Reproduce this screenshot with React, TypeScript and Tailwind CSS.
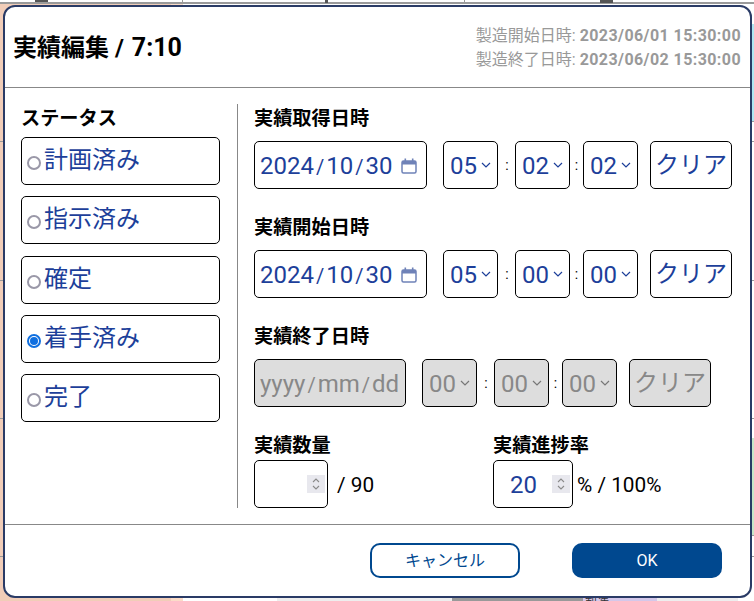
import React from 'react';

const FONT = "font-['Roboto','Noto_Sans_CJK_JP',sans-serif]";

const Chevron = ({ disabled }: { disabled?: boolean }) => (
  <svg width="10" height="6" viewBox="0 0 10 6" fill="none" className="shrink-0">
    <path d="M1 1l4 4 4-4" stroke={disabled ? '#777777' : '#1d3f9a'} strokeWidth="1.2" />
  </svg>
);

const CalendarIcon = () => (
  <svg width="16" height="16" viewBox="0 0 16 16" className="shrink-0">
    <rect x="1" y="3" width="14" height="12" rx="1.5" fill="none" stroke="#6f82b8" strokeWidth="1.5" />
    <rect x="1" y="3" width="14" height="3.5" fill="#6f82b8" />
    <rect x="3.5" y="0.5" width="1.6" height="3" fill="#6f82b8" />
    <rect x="10.9" y="0.5" width="1.6" height="3" fill="#6f82b8" />
  </svg>
);

const Spinner = () => (
  <div className="w-[18px] h-[18px] bg-[#e8e8ee] flex flex-col items-center justify-center gap-[2px]">
    <svg width="8" height="5" viewBox="0 0 8 5" fill="none">
      <path d="M1 4l3-3 3 3" stroke="#8a8a8a" strokeWidth="1.1" />
    </svg>
    <svg width="8" height="5" viewBox="0 0 8 5" fill="none">
      <path d="M1 1l3 3 3-3" stroke="#8a8a8a" strokeWidth="1.1" />
    </svg>
  </div>
);

const Radio = ({ label, checked }: { label: string; checked?: boolean }) => (
  <div className="h-[48px] w-[199px] border border-black rounded-[5px] flex items-center pl-[5px] gap-[3px] text-[24px] text-[#1d3f9a] bg-white">
    {checked ? (
      <span className="w-[14px] h-[14px] mt-[4px] rounded-full border-[2px] border-[#0f6fe0] flex items-center justify-center shrink-0">
        <span className="w-[8px] h-[8px] rounded-full bg-[#0f6fe0]" />
      </span>
    ) : (
      <span className="w-[14px] h-[14px] mt-[4px] rounded-full border-[2px] border-[#9a98a8] shrink-0" />
    )}
    <span className="leading-none relative -top-[1px]">{label}</span>
  </div>
);

const TimeSelect = ({ value, disabled }: { value: string; disabled?: boolean }) => (
  <div
    className={`h-[48px] w-[55px] border border-black rounded-[5px] flex items-center justify-between pl-[6px] pr-[6px] text-[24px] ${
      disabled ? 'bg-[#dddddd] text-[#888888]' : 'bg-white text-[#1d3f9a]'
    }`}
  >
    <span className="relative top-[1px]">{value}</span>
    <Chevron disabled={disabled} />
  </div>
);

const ClearButton = ({ disabled }: { disabled?: boolean }) => (
  <div
    className={`h-[48px] w-[82px] border border-black rounded-[5px] flex items-center justify-center text-[24px] ${
      disabled ? 'bg-[#dddddd] text-[#888888]' : 'bg-white text-[#1d3f9a]'
    }`}
  >
    クリア
  </div>
);

const Slash = () => <span className="mx-[2px] text-[20px]">/</span>;

const DateTimeRow = ({
  label,
  date,
  h,
  m,
  s,
  disabled,
}: {
  label: string;
  date: string[];
  h: string;
  m: string;
  s: string;
  disabled?: boolean;
}) => (
  <div>
    <div className="text-[19.2px] font-bold text-black leading-[30px] mb-[7px]">{label}</div>
    <div className="flex items-center">
      <div
        className={`h-[48px] border border-black rounded-[5px] flex items-center text-[24px] pl-[5px] ${
          disabled ? 'w-[152px] bg-[#dddddd] text-[#888888]' : 'w-[173px] bg-white text-[#1d3f9a]'
        }`}
      >
        <span className="whitespace-nowrap relative top-[1px]">
          {date[0]}
          <Slash />
          {date[1]}
          <Slash />
          {date[2]}
        </span>
        {!disabled && (
          <span className="ml-[9px] relative top-[1px]">
            <CalendarIcon />
          </span>
        )}
      </div>
      <div className="ml-[16px]">
        <TimeSelect value={h} disabled={disabled} />
      </div>
      <span className="w-[17px] pl-[1px] text-center text-[14px] text-black">:</span>
      <TimeSelect value={m} disabled={disabled} />
      <span className="w-[13px] text-center text-[14px] text-black">:</span>
      <TimeSelect value={s} disabled={disabled} />
      <div className="ml-[12px]">
        <ClearButton disabled={disabled} />
      </div>
    </div>
  </div>
);

// the table that shows behind the dialog, only its edges are visible
const Backdrop = () => (
  <div className="absolute inset-0 overflow-hidden bg-white">
    <div className="absolute left-0 top-[4px] bottom-0 w-[171px] bg-[#f1cdb8]" />
    <div className="absolute left-[171px] top-[4px] bottom-0 w-[12px] bg-[#fbdcc8]" />
    <div className="absolute left-0 right-0 top-[2px] h-[2px] bg-[#9a9a9a]" />
    <div className="absolute left-[182px] top-0 h-[3px] w-px bg-[#9a9a9a]" />
    <div className="absolute left-[464px] top-0 h-[3px] w-px bg-[#9a9a9a]" />
    <div className="absolute left-[35px] top-0 h-[2px] w-[13px] bg-[#555555]" />
    <div className="absolute left-[325px] top-0 h-[3px] w-[3px] bg-[#555555]" />
    <div className="absolute left-[600px] top-0 h-[3px] w-[13px] bg-[#555555]" />
    <div className="absolute right-0 top-[24px] w-[4px] h-[97px] bg-[#aee6f2]" />
    <div className="absolute right-0 top-[121px] w-[4px] h-px bg-[#999999]" />
    <div className="absolute right-0 top-[438px] w-[4px] h-[97px] bg-[#c8e6c9]" />
    <div className="absolute right-0 top-[535px] w-[4px] h-px bg-[#999999]" />
    {[141, 280, 418, 556].map((y) => (
      <div key={y} className="absolute left-0 right-0 h-px bg-[#999999]" style={{ top: y }} />
    ))}
    <div className="absolute bottom-0 left-[277px] w-[175px] h-[3px] bg-[#eeeeee]" />
    <div className="absolute bottom-0 left-[452px] w-[131px] h-[3px] bg-[#999999]" />
    <div className="absolute bottom-0 left-[583px] w-[74px] h-[3px] bg-[#d4c8ea] overflow-hidden">
      <span className="absolute left-[2px] -top-[1px] text-[12px] leading-none text-[#333333]">製造</span>
    </div>
    <div className="absolute bottom-0 left-[657px] w-[81px] h-[3px] bg-[#eeeeee]" />
  </div>
);

export default function App() {
  return (
    <div className={`relative w-[754px] h-[601px] overflow-hidden ${FONT}`}>
      <Backdrop />
      <div className="relative pt-[5px] pl-[3px]">
        <div className="w-[749px] h-[593px] bg-white border-[2px] border-[#2a3b66] rounded-[12px] flex flex-col">
          {/* Header */}
          <div className="h-[81px] shrink-0 border-b border-[#888888] flex items-center justify-between pl-[8px] pr-[9px]">
            <h1 className="text-[24px] font-bold text-black leading-none whitespace-nowrap">
              実績編集 / <span className="ml-[2px] text-[25px]">7:10</span>
            </h1>
            <div className="text-[16px] leading-[24px] text-[#999999] text-right relative top-[1px]">
              <div>
                製造開始日時: <span className="font-bold tracking-[0.42px]">2023/06/01 15:30:00</span>
              </div>
              <div>
                製造終了日時: <span className="font-bold tracking-[0.42px]">2023/06/02 15:30:00</span>
              </div>
            </div>
          </div>

          {/* Body */}
          <div className="flex-1 flex pl-[16px] pt-[16px]">
            <div className="w-[217px] h-[404px] border-r border-[#888888] shrink-0">
              <div className="text-[19.2px] font-bold text-black leading-[30px] mb-[3px]">ステータス</div>
              <div className="flex flex-col gap-[11.25px]">
                <Radio label="計画済み" />
                <Radio label="指示済み" />
                <Radio label="確定" />
                <Radio label="着手済み" checked />
                <Radio label="完了" />
              </div>
            </div>

            <div className="pl-[16px] flex flex-col gap-[24px]">
              <DateTimeRow label="実績取得日時" date={['2024', '10', '30']} h="05" m="02" s="02" />
              <DateTimeRow label="実績開始日時" date={['2024', '10', '30']} h="05" m="00" s="00" />
              <DateTimeRow label="実績終了日時" date={['yyyy', 'mm', 'dd']} h="00" m="00" s="00" disabled />
              <div className="flex">
                <div className="w-[239px]">
                  <div className="text-[19.2px] font-bold text-black leading-[29px]">実績数量</div>
                  <div className="flex items-center">
                    <div className="w-[74px] h-[48px] border border-black rounded-[5px] flex items-center justify-end pr-[2px] bg-white">
                      <Spinner />
                    </div>
                    <span className="ml-[9px] text-[20.8px] text-black relative top-[2px]">/ 90</span>
                  </div>
                </div>
                <div>
                  <div className="text-[19.2px] font-bold text-black leading-[29px]">実績進捗率</div>
                  <div className="flex items-center">
                    <div className="w-[80px] h-[48px] border border-black rounded-[5px] flex items-center justify-end pr-[2px] bg-white text-[24px] text-[#1d3f9a]">
                      <span className="mr-[15px] relative top-[1px]">20</span>
                      <Spinner />
                    </div>
                    <span className="ml-[4px] text-[20.8px] text-black relative top-[2px]">% / 100%</span>
                  </div>
                </div>
              </div>
            </div>
          </div>

          {/* Footer */}
          <div className="h-[72px] shrink-0 border-t border-[#888888] flex items-start justify-end gap-[52px] pt-[18px] pr-[28px]">
            <button className="w-[150px] h-[35px] rounded-[10px] border-[2px] border-[#00488f] bg-white text-[16px] text-[#00488f]">
              キャンセル
            </button>
            <button className="w-[150px] h-[35px] rounded-[10px] bg-[#00488f] text-[16px] text-white">OK</button>
          </div>
        </div>
      </div>
    </div>
  );
}
